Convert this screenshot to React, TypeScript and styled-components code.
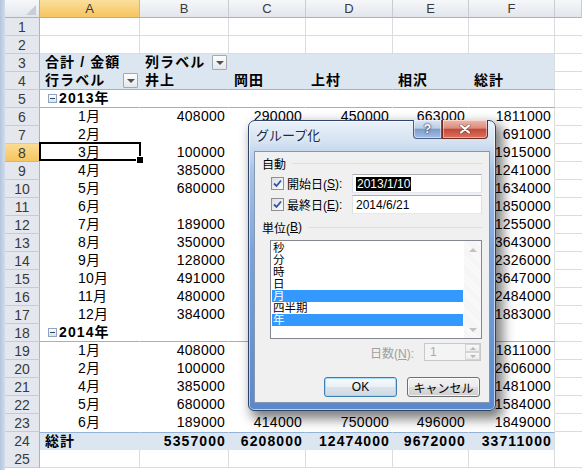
import React from 'react';
import styled, { createGlobalStyle } from 'styled-components';

const GRID = '#dadcdd';
const PIVOT_FILL = '#dce6f1';
const PIVOT_LINE = '#95b3d7';
const HEAD_LINE = '#9eb6ce';
const COLS = '35px 100px 89px 77px 87px 76px 86px 1fr';
const UI_FONT = '"Liberation Sans", "Noto Sans CJK JP", sans-serif';

const GlobalStyle = createGlobalStyle`
  html, body { margin: 0; padding: 0; background: #ffffff; overflow: hidden; }
  body { font-family: ${UI_FONT}; }
  * { box-sizing: border-box; }
`;

const Window = styled.div`
  position: relative;
  display: flex;
  width: 582px;
  height: 470px;
  overflow: hidden;
  background: #fff;
`;

const FrameEdge = styled.div`
  flex: none;
  width: 5px;
  background: linear-gradient(90deg, #b4c6dc, #d0dcea);
`;

const Sheet = styled.div`
  flex: 1;
  display: flex;
  flex-direction: column;
`;

const Row = styled.div`
  flex: none;
  display: grid;
  grid-template-columns: ${COLS};
  height: 18px;
`;

const Corner = styled.div`
  position: relative;
  background: linear-gradient(#f6f7f9, #e3e7ec);
  border-right: 1px solid ${HEAD_LINE};
  border-bottom: 1px solid ${HEAD_LINE};
  &::after {
    content: '';
    position: absolute;
    right: 3px;
    bottom: 2px;
    border-left: 10px solid transparent;
    border-bottom: 10px solid #c9ced5;
  }
`;

const ColHead = styled.div<{ $active?: boolean }>`
  display: flex;
  align-items: center;
  justify-content: center;
  font-size: 13px;
  color: #3a3a3a;
  background: ${(p) =>
    p.$active ? 'linear-gradient(#fbdf9d, #f6c45f)' : 'linear-gradient(#f6f7f9, #e2e6eb)'};
  border-right: 1px solid ${(p) => (p.$active ? '#e4b45a' : '#c6ccd4')};
  border-bottom: 1px solid ${(p) => (p.$active ? '#f0a23a' : HEAD_LINE)};
`;

const RowHead = styled.div<{ $active?: boolean }>`
  display: flex;
  align-items: center;
  justify-content: center;
  font-size: 14px;
  color: #3a3a3a;
  background: ${(p) => (p.$active ? 'linear-gradient(#fbdc92, #f5c562)' : '#e4e8ee')};
  border-right: 1px solid ${(p) => (p.$active ? '#f0a23a' : HEAD_LINE)};
  border-bottom: 1px solid ${(p) => (p.$active ? '#e2b35a' : '#c5ccd6')};
`;

type Align = 'left' | 'right' | 'split';

const Cell = styled.div<{
  $align?: Align;
  $bold?: boolean;
  $fill?: boolean;
  $grid?: boolean;
  $edge?: boolean;
  $lineTop?: boolean;
  $lineBottom?: boolean;
  $indent?: number;
}>`
  position: relative;
  display: flex;
  align-items: center;
  justify-content: ${(p) =>
    p.$align === 'right' ? 'flex-end' : p.$align === 'split' ? 'space-between' : 'flex-start'};
  padding-left: ${(p) => (p.$align === 'right' ? 0 : p.$indent ?? 5)}px;
  padding-right: ${(p) => (p.$align === 'right' ? (p.$bold ? 2 : 3) : 0)}px;
  font-size: 14px;
  line-height: 17px;
  font-weight: ${(p) => (p.$bold ? 700 : 400)};
  letter-spacing: ${(p) => (p.$bold ? '1.1px' : '0.25px')};
  color: #000;
  white-space: nowrap;
  background: ${(p) => (p.$fill ? PIVOT_FILL : '#fff')};
  border-right: 1px solid ${(p) => (p.$grid || p.$edge ? GRID : 'transparent')};
  border-bottom: 1px solid
    ${(p) => (p.$lineBottom ? PIVOT_LINE : p.$grid ? GRID : 'transparent')};
  border-top: ${(p) => (p.$lineTop ? `1px solid ${PIVOT_LINE}` : 'none')};
`;

const SpareCell = styled.div`
  border-bottom: 1px solid ${GRID};
  background: #fff;
`;

const FilterButton = styled.span`
  flex: none;
  width: 15px;
  height: 15px;
  margin-right: 1px;
  border: 1px solid #a4a9b0;
  border-radius: 1px;
  background: linear-gradient(#fdfdfd, #e4e7eb);
  display: inline-flex;
  align-items: center;
  justify-content: center;
  &::after {
    content: '';
    margin-top: 1px;
    border-left: 4px solid transparent;
    border-right: 4px solid transparent;
    border-top: 4px solid #505050;
  }
`;

const CollapseBox = styled.span`
  flex: none;
  width: 9px;
  height: 9px;
  margin-right: 2px;
  border: 1px solid #8ea3bf;
  background: linear-gradient(#ffffff, #d9e2ee);
  display: inline-flex;
  align-items: center;
  justify-content: center;
  &::after {
    content: '';
    width: 5px;
    height: 1px;
    background: #2f4668;
  }
`;

const SelectionFrame = styled.span`
  position: absolute;
  z-index: 2;
  top: -2px;
  left: -1px;
  right: -2px;
  bottom: 0;
  border: 2px solid #000;
  pointer-events: none;
  &::after {
    content: '';
    position: absolute;
    right: -4px;
    bottom: -4px;
    width: 6px;
    height: 6px;
    background: #000;
    border: 1px solid #fff;
    border-right: none;
    border-bottom: none;
  }
`;

/* ---------------- dialog ---------------- */

const Dialog = styled.div`
  position: absolute;
  z-index: 10;
  left: 248px;
  top: 120px;
  width: 248px;
  height: 291px;
  display: flex;
  flex-direction: column;
  border: 1px solid #2f4466;
  border-radius: 7px 7px 6px 6px;
  background: linear-gradient(
    180deg,
    #eaf1f9 0px,
    #d3e1f1 22px,
    #a9c3e6 50px,
    #7ca3d9 130px,
    #5a88cb 291px
  );
  box-shadow: inset 0 0 0 1px rgba(255, 255, 255, 0.6), 5px 6px 12px 2px rgba(0, 0, 0, 0.5);
  font-family: ${UI_FONT};
`;

const TitleBar = styled.div`
  flex: none;
  height: 30px;
  display: flex;
  justify-content: space-between;
  align-items: flex-start;
  padding-left: 7px;
`;

const Title = styled.span`
  margin-top: 7px;
  font-size: 13px;
  line-height: 16px;
  color: #1d2c46;
  text-shadow: 0 0 6px rgba(255, 255, 255, 0.9);
`;

const CaptionButtons = styled.div`
  display: flex;
  margin-top: -1px;
  margin-right: 7px;
`;

const CaptionButton = styled.span<{ $kind: 'help' | 'close' }>`
  display: flex;
  align-items: center;
  justify-content: center;
  height: 19px;
  width: ${(p) => (p.$kind === 'help' ? 29 : 46)}px;
  border: 1px solid ${(p) => (p.$kind === 'help' ? '#45608a' : '#6e2a22')};
  border-top: none;
  border-radius: ${(p) => (p.$kind === 'help' ? '0 0 0 4px' : '0 0 4px 0')};
  background: ${(p) =>
    p.$kind === 'help'
      ? 'linear-gradient(#dde7f4 0%, #bccde5 45%, #7f9cc7 52%, #a3bfe6 100%)'
      : 'linear-gradient(#edb9ad 0%, #dc8c7b 45%, #c5483a 52%, #d9735f 100%)'};
  box-shadow: inset 0 0 0 1px rgba(255, 255, 255, 0.45);
  color: #fff;
  font-size: 12px;
  line-height: 14px;
  font-weight: 700;
  text-shadow: 0 0 2px #2a3850, 0 0 2px #2a3850;
`;

const Client = styled.div`
  flex: 1;
  display: flex;
  flex-direction: column;
  margin: 0 5px 7px 5px;
  padding: 1px 6px 0 7px;
  background: #f0f0f0;
  border: 1px solid #8497b3;
  font-size: 12px;
  color: #000;
`;

const SectionHead = styled.div<{ $gap?: number }>`
  flex: none;
  display: flex;
  align-items: center;
  height: 20px;
  margin-top: ${(p) => p.$gap ?? 0}px;
`;

const Rule = styled.span`
  flex: 1;
  height: 1px;
  margin-left: 6px;
  margin-right: 1px;
  background: #d5dfe5;
`;

const FieldRow = styled.div`
  flex: none;
  display: flex;
  align-items: center;
  height: 21px;
  margin-left: 9px;
`;

const CheckBox = styled.span`
  flex: none;
  width: 13px;
  height: 13px;
  margin-right: 3px;
  border: 1px solid #8e8f8f;
  background: linear-gradient(135deg, #dedede, #fbfbfb);
  display: inline-flex;
  align-items: center;
  justify-content: center;
`;

const TextBox = styled.div`
  margin-left: auto;
  margin-right: 1px;
  width: 130px;
  height: 19px;
  display: flex;
  align-items: center;
  padding-left: 3px;
  background: #fff;
  border: 1px solid #abadb3;
  border-left-color: #dbdfe6;
  border-right-color: #dbdfe6;
  border-bottom-color: #e3e9ef;
  font-size: 12px;
`;

const SelectedText = styled.span`
  background: #000;
  color: #fff;
  padding: 0 1px;
  line-height: 14px;
`;

const ListBox = styled.div`
  flex: none;
  display: flex;
  height: 99px;
  margin: 3px 1px 0 8px;
  border: 1px solid #828790;
  background: #fff;
`;

const ItemList = styled.div`
  flex: 1;
  display: flex;
  flex-direction: column;
  padding: 1px 1px 0 1px;
`;

const Item = styled.div<{ $selected?: boolean }>`
  height: 12px;
  line-height: 12px;
  font-size: 11.5px;
  padding-left: 1px;
  overflow: hidden;
  background: ${(p) => (p.$selected ? '#3399ff' : 'transparent')};
  color: ${(p) => (p.$selected ? '#fff' : '#000')};
`;

const ScrollBar = styled.div`
  flex: none;
  width: 17px;
  display: flex;
  flex-direction: column;
  justify-content: space-between;
  background: repeating-linear-gradient(45deg, #f3f3f3 0 1px, #fbfbfb 1px 2px);
`;

const ScrollArrow = styled.span<{ $down?: boolean }>`
  height: 17px;
  display: flex;
  align-items: center;
  justify-content: center;
  &::after {
    content: '';
    border-left: 4px solid transparent;
    border-right: 4px solid transparent;
    ${(p) => (p.$down ? 'border-top: 4px solid #c2c2c2;' : 'border-bottom: 4px solid #c2c2c2;')}
  }
`;

const SpinRow = styled.div`
  flex: none;
  display: flex;
  justify-content: flex-end;
  align-items: center;
  height: 18px;
  margin-top: 4px;
  margin-right: 2px;
`;

const DisabledLabel = styled.span`
  color: #a0a0a0;
  margin-right: 10px;
`;

const SpinBox = styled.div`
  width: 57px;
  height: 18px;
  display: flex;
  border: 1px solid #c8c8c8;
  background: #f4f4f4;
`;

const SpinValue = styled.span`
  flex: 1;
  padding-left: 5px;
  line-height: 16px;
  color: #a8a8a8;
`;

const SpinButtons = styled.div`
  width: 15px;
  display: flex;
  flex-direction: column;
`;

const SpinButton = styled.span<{ $down?: boolean }>`
  flex: 1;
  display: flex;
  align-items: center;
  justify-content: center;
  border: 1px solid #d4d4d4;
  background: linear-gradient(#f8f8f8, #ececec);
  &::after {
    content: '';
    border-left: 3px solid transparent;
    border-right: 3px solid transparent;
    ${(p) => (p.$down ? 'border-top: 3px solid #b8b8b8;' : 'border-bottom: 3px solid #b8b8b8;')}
  }
`;

const ButtonRow = styled.div`
  flex: none;
  display: flex;
  justify-content: flex-end;
  gap: 10px;
  margin-top: 16px;
  margin-right: 3px;
`;

const PushButton = styled.span<{ $default?: boolean }>`
  width: 73px;
  height: 20px;
  display: flex;
  align-items: center;
  justify-content: center;
  font-size: 12px;
  border: 1px solid ${(p) => (p.$default ? '#3c7fb1' : '#707070')};
  border-radius: 3px;
  background: ${(p) =>
    p.$default
      ? 'linear-gradient(#f6fafd 0%, #eaf0f5 50%, #dbe3ea 51%, #d0dae3 100%)'
      : 'linear-gradient(#f2f2f2 0%, #ebebeb 50%, #dddddd 51%, #cfcfcf 100%)'};
  box-shadow: inset 0 0 0 1px ${(p) => (p.$default ? 'rgba(160,215,245,0.9)' : 'rgba(255,255,255,0.7)')};
`;

/* ---------------- data ---------------- */

type RowDef =
  | { n: number; kind: 'blank' | 'title' | 'labels' | 'total' }
  | { n: number; kind: 'year'; label: string }
  | { n: number; kind: 'month'; label: string; values: string[] };

const names = ['井上', '岡田', '上村', '相沢', '総計'];
const totals = ['5357000', '6208000', '12474000', '9672000', '33711000'];

const m = (n: number, label: string, values: string[]): RowDef => ({ n, kind: 'month', label, values });

const rows: RowDef[] = [
  { n: 1, kind: 'blank' },
  { n: 2, kind: 'blank' },
  { n: 3, kind: 'title' },
  { n: 4, kind: 'labels' },
  { n: 5, kind: 'year', label: '2013年' },
  m(6, '1月', ['408000', '290000', '450000', '663000', '1811000']),
  m(7, '2月', ['', '', '', '', '691000']),
  m(8, '3月', ['100000', '', '', '', '1915000']),
  m(9, '4月', ['385000', '', '', '', '1241000']),
  m(10, '5月', ['680000', '', '', '', '1634000']),
  m(11, '6月', ['', '', '', '', '1850000']),
  m(12, '7月', ['189000', '', '', '', '1255000']),
  m(13, '8月', ['350000', '', '', '', '3643000']),
  m(14, '9月', ['128000', '', '', '', '2326000']),
  m(15, '10月', ['491000', '', '', '', '3647000']),
  m(16, '11月', ['480000', '', '', '', '2484000']),
  m(17, '12月', ['384000', '', '', '', '1883000']),
  { n: 18, kind: 'year', label: '2014年' },
  m(19, '1月', ['408000', '', '', '', '1811000']),
  m(20, '2月', ['100000', '', '', '', '2606000']),
  m(21, '4月', ['385000', '', '', '', '1481000']),
  m(22, '5月', ['680000', '', '', '', '1584000']),
  m(23, '6月', ['189000', '414000', '750000', '496000', '1849000']),
  { n: 24, kind: 'total' },
  { n: 25, kind: 'blank' },
];

const SELECTED_ROW = 8;

function rowCells(r: RowDef): React.ReactNode[] {
  const edge = (i: number) => i === 4;
  switch (r.kind) {
    case 'blank':
      return [0, 1, 2, 3, 4, 5].map((i) => <Cell key={i} $grid />);
    case 'title':
      return [
        <Cell key="a" $fill $bold>合計 / 金額</Cell>,
        <Cell key="b" $fill $bold $align="split">
          列ラベル
          <FilterButton />
        </Cell>,
        ...[1, 2, 3, 4].map((i) => <Cell key={i} $fill $edge={edge(i)} />),
      ];
    case 'labels':
      return [
        <Cell key="a" $fill $bold $lineBottom $align="split">
          行ラベル
          <FilterButton />
        </Cell>,
        ...names.map((t, i) => (
          <Cell key={t} $fill $bold $lineBottom $edge={edge(i)}>
            {t}
          </Cell>
        )),
      ];
    case 'year':
      return [
        <Cell key="a" $bold $lineBottom $indent={8}>
          <CollapseBox />
          {r.label}
        </Cell>,
        ...[0, 1, 2, 3, 4].map((i) => <Cell key={i} $lineBottom $edge={edge(i)} />),
      ];
    case 'month':
      return [
        <Cell key="a" $indent={38}>
          {r.label}
          {r.n === SELECTED_ROW && <SelectionFrame />}
        </Cell>,
        ...r.values.map((v, i) => (
          <Cell key={i} $align="right" $edge={edge(i)}>
            {v}
          </Cell>
        )),
      ];
    case 'total':
      return [
        <Cell key="a" $fill $bold $lineTop>総計</Cell>,
        ...totals.map((v, i) => (
          <Cell key={i} $fill $bold $lineTop $align="right" $edge={edge(i)}>
            {v}
          </Cell>
        )),
      ];
  }
}

const CheckMark = () => (
  <svg width="9" height="9" viewBox="0 0 9 9">
    <path d="M1 4.5 L3.5 7 L8 1.5" fill="none" stroke="#2b55a8" strokeWidth="1.8" />
  </svg>
);

const CloseGlyph = () => (
  <svg width="12" height="10" viewBox="0 0 12 10">
    <path d="M2 1.5 L10 8.5 M10 1.5 L2 8.5" stroke="#3c2520" strokeWidth="3.4" strokeLinecap="round" opacity="0.5" />
    <path d="M2 1.5 L10 8.5 M10 1.5 L2 8.5" stroke="#ffffff" strokeWidth="2.2" strokeLinecap="round" />
  </svg>
);

const units = ['秒', '分', '時', '日', '月', '四半期', '年'];
const selectedUnits = new Set(['月', '年']);

const GroupDialog = () => (
  <Dialog>
    <TitleBar>
      <Title>グループ化</Title>
      <CaptionButtons>
        <CaptionButton $kind="help">?</CaptionButton>
        <CaptionButton $kind="close">
          <CloseGlyph />
        </CaptionButton>
      </CaptionButtons>
    </TitleBar>
    <Client>
      <SectionHead>
        自動
        <Rule />
      </SectionHead>
      <FieldRow>
        <CheckBox>
          <CheckMark />
        </CheckBox>
        開始日(<u>S</u>):
        <TextBox>
          <SelectedText>2013/1/10</SelectedText>
        </TextBox>
      </FieldRow>
      <FieldRow>
        <CheckBox>
          <CheckMark />
        </CheckBox>
        最終日(<u>E</u>):
        <TextBox>2014/6/21</TextBox>
      </FieldRow>
      <SectionHead $gap={2}>
        単位(<u>B</u>)
        <Rule />
      </SectionHead>
      <ListBox>
        <ItemList>
          {units.map((u) => (
            <Item key={u} $selected={selectedUnits.has(u)}>
              {u}
            </Item>
          ))}
        </ItemList>
        <ScrollBar>
          <ScrollArrow />
          <ScrollArrow $down />
        </ScrollBar>
      </ListBox>
      <SpinRow>
        <DisabledLabel>
          日数(<u>N</u>):
        </DisabledLabel>
        <SpinBox>
          <SpinValue>1</SpinValue>
          <SpinButtons>
            <SpinButton />
            <SpinButton $down />
          </SpinButtons>
        </SpinBox>
      </SpinRow>
      <ButtonRow>
        <PushButton $default>OK</PushButton>
        <PushButton>キャンセル</PushButton>
      </ButtonRow>
    </Client>
  </Dialog>
);

export default function App() {
  return (
    <>
      <GlobalStyle />
      <Window>
        <FrameEdge />
        <Sheet>
          <Row>
            <Corner />
            {['A', 'B', 'C', 'D', 'E', 'F', ''].map((c) => (
              <ColHead key={c} $active={c === 'A'}>
                {c}
              </ColHead>
            ))}
          </Row>
          {rows.map((r) => (
            <Row key={r.n}>
              <RowHead $active={r.n === SELECTED_ROW}>{r.n}</RowHead>
              {rowCells(r)}
              <SpareCell />
            </Row>
          ))}
        </Sheet>
        <GroupDialog />
      </Window>
    </>
  );
}
